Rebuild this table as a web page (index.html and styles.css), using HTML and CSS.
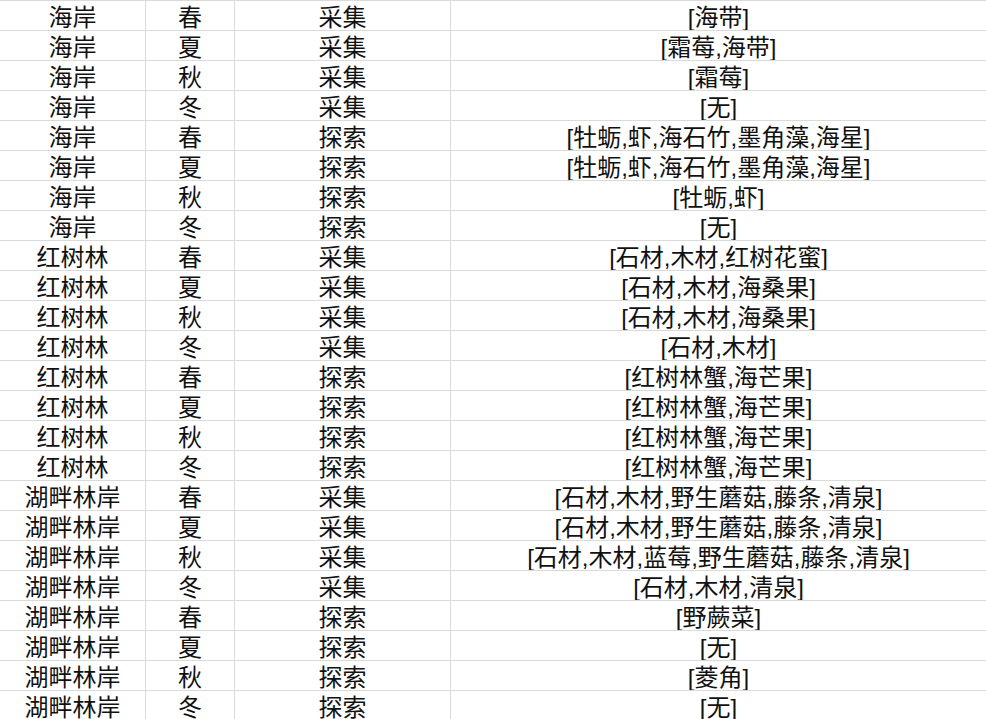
FILE: index.html
```html
<!DOCTYPE html>
<html lang="zh">
<head>
<meta charset="utf-8">
<link rel="stylesheet" href="styles.css">
</head>
<body>
<div class="sheet">
<div class="row"><div class="c c1">海岸</div><div class="c c2">春</div><div class="c c3">采集</div><div class="c c4">[海带]</div></div>
<div class="row"><div class="c c1">海岸</div><div class="c c2">夏</div><div class="c c3">采集</div><div class="c c4">[霜莓,海带]</div></div>
<div class="row"><div class="c c1">海岸</div><div class="c c2">秋</div><div class="c c3">采集</div><div class="c c4">[霜莓]</div></div>
<div class="row"><div class="c c1">海岸</div><div class="c c2">冬</div><div class="c c3">采集</div><div class="c c4">[无]</div></div>
<div class="row"><div class="c c1">海岸</div><div class="c c2">春</div><div class="c c3">探索</div><div class="c c4">[牡蛎,虾,海石竹,墨角藻,海星]</div></div>
<div class="row"><div class="c c1">海岸</div><div class="c c2">夏</div><div class="c c3">探索</div><div class="c c4">[牡蛎,虾,海石竹,墨角藻,海星]</div></div>
<div class="row"><div class="c c1">海岸</div><div class="c c2">秋</div><div class="c c3">探索</div><div class="c c4">[牡蛎,虾]</div></div>
<div class="row"><div class="c c1">海岸</div><div class="c c2">冬</div><div class="c c3">探索</div><div class="c c4">[无]</div></div>
<div class="row"><div class="c c1">红树林</div><div class="c c2">春</div><div class="c c3">采集</div><div class="c c4">[石材,木材,红树花蜜]</div></div>
<div class="row"><div class="c c1">红树林</div><div class="c c2">夏</div><div class="c c3">采集</div><div class="c c4">[石材,木材,海桑果]</div></div>
<div class="row"><div class="c c1">红树林</div><div class="c c2">秋</div><div class="c c3">采集</div><div class="c c4">[石材,木材,海桑果]</div></div>
<div class="row"><div class="c c1">红树林</div><div class="c c2">冬</div><div class="c c3">采集</div><div class="c c4">[石材,木材]</div></div>
<div class="row"><div class="c c1">红树林</div><div class="c c2">春</div><div class="c c3">探索</div><div class="c c4">[红树林蟹,海芒果]</div></div>
<div class="row"><div class="c c1">红树林</div><div class="c c2">夏</div><div class="c c3">探索</div><div class="c c4">[红树林蟹,海芒果]</div></div>
<div class="row"><div class="c c1">红树林</div><div class="c c2">秋</div><div class="c c3">探索</div><div class="c c4">[红树林蟹,海芒果]</div></div>
<div class="row"><div class="c c1">红树林</div><div class="c c2">冬</div><div class="c c3">探索</div><div class="c c4">[红树林蟹,海芒果]</div></div>
<div class="row"><div class="c c1">湖畔林岸</div><div class="c c2">春</div><div class="c c3">采集</div><div class="c c4">[石材,木材,野生蘑菇,藤条,清泉]</div></div>
<div class="row"><div class="c c1">湖畔林岸</div><div class="c c2">夏</div><div class="c c3">采集</div><div class="c c4">[石材,木材,野生蘑菇,藤条,清泉]</div></div>
<div class="row"><div class="c c1">湖畔林岸</div><div class="c c2">秋</div><div class="c c3">采集</div><div class="c c4">[石材,木材,蓝莓,野生蘑菇,藤条,清泉]</div></div>
<div class="row"><div class="c c1">湖畔林岸</div><div class="c c2">冬</div><div class="c c3">采集</div><div class="c c4">[石材,木材,清泉]</div></div>
<div class="row"><div class="c c1">湖畔林岸</div><div class="c c2">春</div><div class="c c3">探索</div><div class="c c4">[野蕨菜]</div></div>
<div class="row"><div class="c c1">湖畔林岸</div><div class="c c2">夏</div><div class="c c3">探索</div><div class="c c4">[无]</div></div>
<div class="row"><div class="c c1">湖畔林岸</div><div class="c c2">秋</div><div class="c c3">探索</div><div class="c c4">[菱角]</div></div>
<div class="row"><div class="c c1">湖畔林岸</div><div class="c c2">冬</div><div class="c c3">探索</div><div class="c c4">[无]</div></div>
</div>
</body>
</html>
```
FILE: styles.css
```css
html, body {
  margin: 0;
  padding: 0;
  background: #ffffff;
  overflow: hidden;
}
.sheet {
  display: flex;
  flex-direction: column;
  width: 986px;
  font-family: "Liberation Sans", "Noto Sans CJK SC", sans-serif;
  font-size: 24px;
  color: #111111;
}
.row {
  display: grid;
  grid-template-columns: 145px 89px 216px 536px;
  height: 30px;
  box-sizing: border-box;
  border-top: 1px solid #dadada;
}
.c {
  display: flex;
  align-items: center;
  justify-content: center;
  line-height: 29px;
  padding-top: 2px;
  box-sizing: border-box;
  white-space: nowrap;
}
.c2, .c3, .c4 {
  border-left: 1px solid #dadada;
}
```
